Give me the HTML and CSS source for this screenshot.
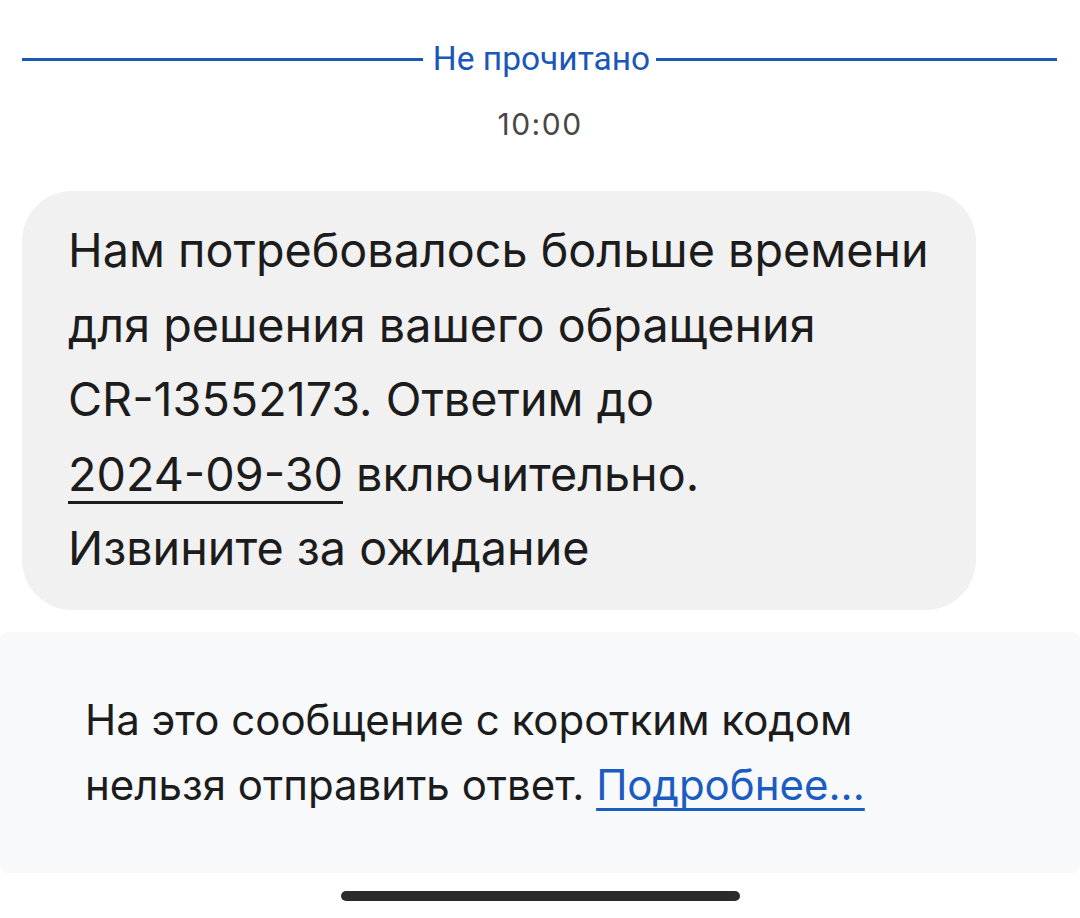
FILE: index.html
```html
<!DOCTYPE html>
<html lang="ru">
<head>
<meta charset="utf-8">
<title>Сообщение</title>
<link rel="stylesheet" href="styles.css">
</head>
<body>
<div class="screen">
  <div class="divider">
    <span class="divider-line"></span>
    <span class="divider-label">Не прочитано</span>
    <span class="divider-line"></span>
  </div>
  <div class="timestamp">10:00</div>
  <div class="bubble">
    Нам потребовалось больше времени<br>
    для решения вашего обращения<br>
    CR-13552173. Ответим до<br>
    <span class="date-link">2024-09-30</span> включительно.<br>
    Извините за ожидание
  </div>
  <div class="notice">
    На это сообщение с коротким кодом<br>
    нельзя отправить ответ. <a class="notice-link" href="#">Подробнее...</a>
  </div>
  <div class="home-bar-row"><span class="home-bar"></span></div>
</div>
</body>
</html>
```

FILE: styles.css
```css
html, body {
  margin: 0;
  padding: 0;
  background: #ffffff;
}

.screen {
  width: 1080px;
  height: 918px;
  overflow: hidden;
  font-family: "Inter", "Liberation Sans", sans-serif;
  color: #1c1c1c;
}

.divider {
  display: flex;
  align-items: center;
  padding: 39px 23px 0 22px;
  height: 40px;
}

.divider-line {
  flex: 1;
  height: 3px;
  background: #1b57b6;
}

.divider-label {
  font-family: "Roboto", "Liberation Sans", sans-serif;
  font-size: 33.5px;
  line-height: 40px;
  color: #1b57b6;
  padding: 0 6px 0 10px;
}

.timestamp {
  margin-top: 25px;
  text-align: center;
  font-size: 30px;
  letter-spacing: 1.5px;
  line-height: 40px;
  color: #474747;
}

.bubble {
  margin: 47px 0 0 22px;
  width: 954px;
  box-sizing: border-box;
  padding: 22px 20px 24px 46px;
  background: #f1f1f1;
  border-radius: 50px;
  font-size: 46.7px;
  line-height: 74.5px;
  color: #1c1c1c;
}

.date-link {
  text-decoration: underline;
  text-decoration-thickness: 3px;
  text-underline-offset: 10px;
  text-decoration-skip-ink: none;
}

.notice {
  margin-top: 22px;
  height: 241px;
  box-sizing: border-box;
  padding: 55px 20px 0 85px;
  background: #f8f9fb;
  border-radius: 8px;
  font-size: 42px;
  line-height: 65px;
  color: #1c1c1c;
}

.notice-link {
  color: #1a5cc2;
  text-decoration: underline;
  text-decoration-thickness: 3px;
  text-underline-offset: 8px;
  text-decoration-skip-ink: none;
}

.home-bar-row {
  display: flex;
  justify-content: center;
  padding-top: 18px;
}

.home-bar {
  width: 399px;
  height: 10px;
  border-radius: 5px;
  background: #2b2b2b;
}
```
